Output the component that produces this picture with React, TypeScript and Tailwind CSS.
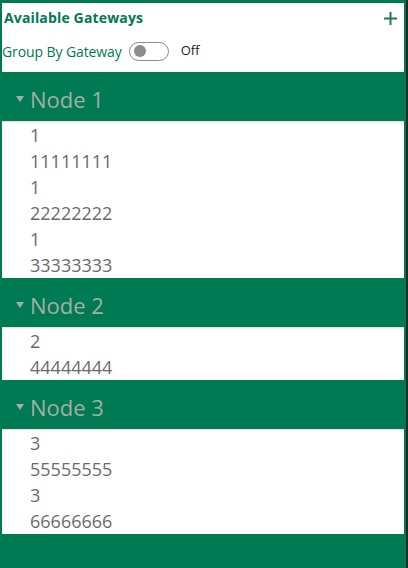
import React from "react";

const font = { fontFamily: '"Open Sans", "Noto Sans", sans-serif' };

const groups = [
  { name: "Node 1", items: ["1", "11111111", "1", "22222222", "1", "33333333"] },
  { name: "Node 2", items: ["2", "44444444"] },
  { name: "Node 3", items: ["3", "55555555", "3", "66666666"] },
];

export default function App() {
  return (
    <div className="flex h-[568px] w-[408px] bg-[#1d2a27]" style={font}>
      <div className="flex w-[406px] flex-col bg-[#007a53] px-[2px] pt-[3px]">
        <div className="flex h-[69px] flex-col bg-white">
          <div className="flex h-[29px] items-center justify-between pl-[2px] pr-[6px]">
            <span className="text-[14px] font-bold tracking-[0.15px] text-[#007a53]">Available Gateways</span>
            <svg width="15" height="15" viewBox="0 0 15 15" className="mt-[1px]">
              <path d="M7.5 1v13M1 7.5h13" stroke="#1f7a58" strokeWidth="2" />
            </svg>
          </div>
          <div className="flex h-[38px] items-center">
            <span className="text-[14px] tracking-[-0.1px] text-[#007a53]">Group By Gateway</span>
            <div className="ml-[7px] flex h-[19px] w-[40px] items-center rounded-full border border-[#8a8a8a] bg-white pl-[4px]">
              <div className="h-[12px] w-[12px] rounded-full bg-[#8c8c8c]" />
            </div>
            <span className="ml-[12px] text-[13px] text-[#222]">Off</span>
          </div>
        </div>
        {groups.map((g) => (
          <div key={g.name} className="flex flex-col">
            <div className="flex h-[49px] items-center pl-[14px] pt-[4px]">
              <svg width="8" height="7" viewBox="0 0 8 7" className="mr-[6px] mt-[1px]">
                <path d="M0 0h8L4 6z" fill="#a3aea8" />
              </svg>
              <span className="text-[22px] leading-none text-[#a3aea8]">{g.name}</span>
            </div>
            <div className="flex flex-col border-t border-[#dfe6e3] bg-white pl-[28px]">
              {g.items.map((it, i) => (
                <div key={i} className="flex h-[26px] items-center text-[18px] leading-none text-[#6b6b6b]">
                  {it}
                </div>
              ))}
            </div>
          </div>
        ))}
      </div>
    </div>
  );
}
